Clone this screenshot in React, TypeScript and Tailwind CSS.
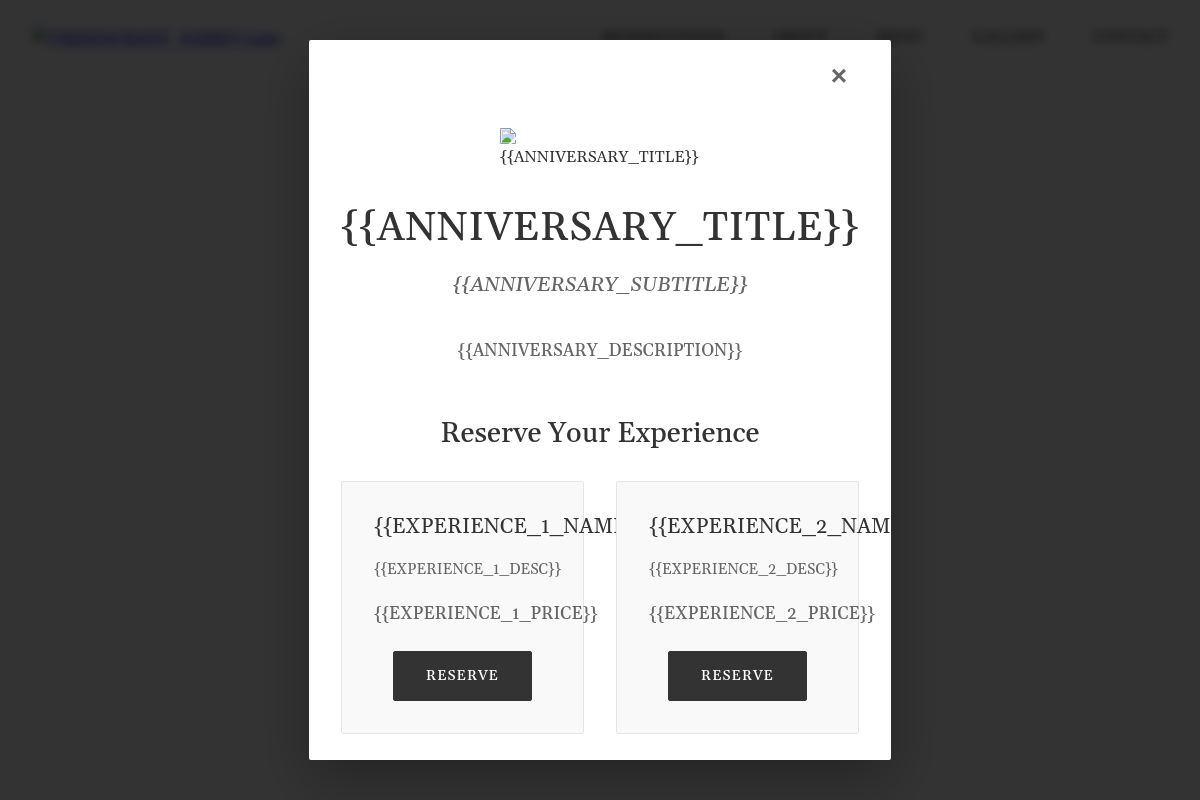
import React from "react";

const links = ["Reservations", "About", "Menu", "Gallery", "Contact"];

const experiences = [
  { name: "{{EXPERIENCE_1_NAME}}", desc: "{{EXPERIENCE_1_DESC}}", price: "{{EXPERIENCE_1_PRICE}}" },
  { name: "{{EXPERIENCE_2_NAME}}", desc: "{{EXPERIENCE_2_DESC}}", price: "{{EXPERIENCE_2_PRICE}}" },
];

function ImageIcon() {
  return (
    <svg className="inline-block size-4 shrink-0" viewBox="0 0 16 16" aria-hidden="true">
      <path d="M.5.5h10l5 5v10H.5z" fill="#fff" />
      <path d="M1.500 1.500h9v4.500h4V14.500h-13z" fill="#c2d3f4" />
      <path d="M3 6c-.2-1.200.8-1.800 1.600-1.500C5 3 7.200 3.200 7.300 4.700 8.300 4.700 8.500 6 7.700 6z" fill="#fff" />
      <path d="M1.500 14.500C3 11.500 5 9.500 7.300 9.500c2 0 3.500 1.500 4.500 5z" fill="#4dab2e" />
      <path d="M.5 15.500V.5h10l5 5v10z" fill="none" stroke="#9b9b9b" />
      <path d="M10.500.5v5h5z" fill="#f2f2f2" stroke="#9b9b9b" />
      <path d="M8.500 16 16 8.500v3L11.500 16z" fill="#fff" />
    </svg>
  );
}

export default function App() {
  return (
    <div className="min-h-screen bg-white font-[Gelasio,Georgia,'Liberation_Serif',serif] text-[#333333]">
      <header className="flex items-center justify-between px-8 py-6">
        <a href="#home" className="flex items-start text-[#0000ee] underline">
          <ImageIcon />
          <span className="leading-6">{"{{RESTAURANT_NAME}} Logo"}</span>
        </a>
        <nav className="flex gap-12">
          {links.map((link) => (
            <a key={link} href={`#${link.toLowerCase()}`} className="text-[15px] leading-7 font-medium tracking-wide uppercase">
              {link}
            </a>
          ))}
        </nav>
      </header>

      <div className="fixed inset-0 flex items-center justify-center bg-black/80 p-10 backdrop-blur-[5px]">
        <section
          role="dialog"
          aria-modal="true"
          aria-labelledby="dialog-title"
          className="max-h-full w-full max-w-[582px] overflow-hidden rounded-xs bg-white px-8 shadow-[0_20px_60px_rgba(0,0,0,0.3)]"
        >
          <div className="flex justify-end pt-4">
            <button
              type="button"
              aria-label="Close"
              className="size-10 font-['Liberation_Sans',sans-serif] text-[28px] leading-10 font-bold text-[#666666]"
            >
              ×
            </button>
          </div>

          <div className="flex flex-col items-center pt-8 text-center">
            <div className="flex w-[200px] flex-col items-start text-base leading-[26px] whitespace-nowrap">
              <ImageIcon />
              <span>{"{{ANNIVERSARY_TITLE}}"}</span>
            </div>
            <h1 id="dialog-title" className="mt-8 text-[40px] leading-[54px] font-medium tracking-[0.5px]">
              {"{{ANNIVERSARY_TITLE}}"}
            </h1>
            <p className="mt-3 text-[20px] leading-[34px] font-medium text-[#666666] italic">
              {"{{ANNIVERSARY_SUBTITLE}}"}
            </p>
            <p className="mt-8 text-[17px] leading-[34px] font-medium text-[#666666]">
              {"{{ANNIVERSARY_DESCRIPTION}}"}
            </p>
          </div>

          <h2 className="mt-[43px] text-center text-[28px] leading-[46px] font-medium">Reserve Your Experience</h2>
          <div className="mt-6 grid grid-cols-2 gap-8 pb-8">
            {experiences.map((item) => (
              <article
                key={item.name}
                className="relative min-w-0 rounded-xs border border-[#e5e5e5] bg-[#f9f9f9] p-8 text-center"
              >
                <h3 className="text-[21px] leading-[26px]">{item.name}</h3>
                <p className="mt-[18px] text-[15px] leading-6 text-[#666666]">{item.desc}</p>
                <p className="mt-4 text-[17px] leading-8 font-medium text-[#666666]">{item.price}</p>
                <button
                  type="button"
                  className="mt-[21px] rounded-xs border border-[#333333] bg-[#333333] px-8 py-3 text-[14px] leading-6 font-medium tracking-[1px] text-white uppercase"
                >
                  Reserve
                </button>
              </article>
            ))}
          </div>
        </section>
      </div>
    </div>
  );
}
